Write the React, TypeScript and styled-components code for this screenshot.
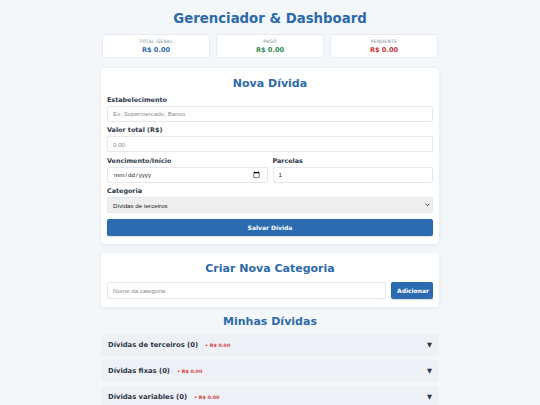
import React from "react";
import styled, { createGlobalStyle } from "styled-components";

const GlobalStyle = createGlobalStyle`
  body {
    margin: 0;
    background: #f4f7fa;
    font-family: "DejaVu Sans", Verdana, sans-serif;
    color: #2d3748;
  }
  * { box-sizing: border-box; }
`;

const Page = styled.main`
  width: 338px;
  margin: 0 auto;
  padding: 9px 0 0;
  display: flex;
  flex-direction: column;
`;

const MainTitle = styled.h1`
  margin: 0 0 5px;
  text-align: center;
  font-size: 13.3px;
  font-weight: bold;
  color: #2c6aa9;
  line-height: 20px;
`;

const StatsRow = styled.div`
  display: grid;
  grid-template-columns: repeat(3, 1fr);
  gap: 6px;
  padding: 0 1px;
  margin-bottom: 10px;
`;

const StatCard = styled.div`
  height: 24px;
  background: #fff;
  border: 1px solid #e6ebf1;
  border-radius: 3px;
  display: flex;
  flex-direction: column;
  align-items: center;
  justify-content: center;
  gap: 2px;
`;

const StatLabel = styled.span`
  font-size: 4.6px;
  color: #7b8794;
  text-transform: uppercase;
  letter-spacing: 0.2px;
`;

const StatValue = styled.span<{ $tone: string }>`
  font-size: 6.6px;
  font-weight: bold;
  color: ${(p) => p.$tone};
`;

const Card = styled.section<{ $gap: number }>`
  background: #fff;
  border-radius: 4px;
  box-shadow: 0 1px 4px rgba(0, 0, 0, 0.08);
  padding: 8px 6px 8px;
  margin-bottom: ${(p) => p.$gap}px;
`;

const CardTitle = styled.h2<{ $gap: number }>`
  margin: 0 0 ${(p) => p.$gap}px;
  text-align: center;
  font-size: 11px;
  font-weight: bold;
  color: #2c6aa9;
  line-height: 16px;
`;

const Field = styled.div<{ $gap?: number }>`
  display: flex;
  flex-direction: column;
  margin-bottom: ${(p) => p.$gap ?? 5.5}px;
`;

const Label = styled.label`
  font-size: 6.4px;
  font-weight: bold;
  color: #2d3748;
  margin-bottom: 2px;
  line-height: 7px;
`;

const Input = styled.input<{ $h?: number }>`
  height: ${(p) => p.$h ?? 16}px;
  width: 100%;
  border: 1px solid #e3e8ee;
  border-radius: 2px;
  padding: 0 5px;
  font-family: "Liberation Sans", Arial, sans-serif;
  font-size: 6.2px;
  color: #222;
  background: #fff;
  outline: none;
  &::placeholder { color: #8a8a8a; }
`;

const SelectWrap = styled.div`
  position: relative;
  height: 16px;
  svg {
    position: absolute;
    right: 3px;
    top: 6px;
    pointer-events: none;
  }
`;

const Select = styled.select`
  appearance: none;
  display: block;
  height: 16px;
  width: 100%;
  border: 1px solid #e3e8ee;
  border-radius: 2px;
  padding: 0 5px;
  font-family: "Liberation Sans", Arial, sans-serif;
  font-size: 6.2px;
  color: #222;
  background: #efefef;
`;

const Row = styled.div`
  display: grid;
  grid-template-columns: 1fr 1fr;
  gap: 5px;
`;

const PrimaryButton = styled.button`
  display: block;
  height: 17px;
  width: 100%;
  border: none;
  border-radius: 2px;
  background: #2c6bb0;
  color: #fff;
  font-family: "DejaVu Sans", Verdana, sans-serif;
  font-size: 6px;
  font-weight: bold;
  box-shadow: 0 1px 2px rgba(0, 0, 0, 0.15);
`;

const InlineForm = styled.div`
  display: flex;
  gap: 5px;
`;

const AddButton = styled(PrimaryButton)`
  width: 42px;
  flex-shrink: 0;
`;

const AccordionList = styled.div`
  display: flex;
  flex-direction: column;
  gap: 4px;
`;

const AccordionItem = styled.div`
  height: 22px;
  flex-shrink: 0;
  background: #edf1f6;
  border-radius: 3px;
  display: flex;
  align-items: center;
  padding: 0 7px;
`;

const ItemName = styled.span`
  font-size: 6.8px;
  font-weight: bold;
  color: #2d3748;
`;

const ItemTotal = styled.span`
  font-size: 4.8px;
  font-weight: bold;
  color: #d33a3a;
  margin-left: 7px;
`;

const Arrow = styled.span`
  margin-left: auto;
  font-size: 6.5px;
  color: #2d3748;
`;

const categories = ["Dívidas de terceiros", "Dívidas fixas", "Dívidas variables"];

export default function App() {
  return (
    <>
      <GlobalStyle />
      <Page>
        <MainTitle>Gerenciador &amp; Dashboard</MainTitle>
        <StatsRow>
          <StatCard>
            <StatLabel>Total Geral</StatLabel>
            <StatValue $tone="#2c6aa9">R$ 0.00</StatValue>
          </StatCard>
          <StatCard>
            <StatLabel>Pago</StatLabel>
            <StatValue $tone="#2f8a55">R$ 0.00</StatValue>
          </StatCard>
          <StatCard>
            <StatLabel>Pendente</StatLabel>
            <StatValue $tone="#c53434">R$ 0.00</StatValue>
          </StatCard>
        </StatsRow>

        <Card $gap={9}>
          <CardTitle $gap={4.5}>Nova Dívida</CardTitle>
          <Field>
            <Label>Estabelecimento</Label>
            <Input placeholder="Ex: Supermercado, Banco" />
          </Field>
          <Field>
            <Label>Valor total (R$)</Label>
            <Input placeholder="0,00" />
          </Field>
          <Row>
            <Field>
              <Label>Vencimento/Início</Label>
              <Input type="date" />
            </Field>
            <Field>
              <Label>Parcelas</Label>
              <Input defaultValue="1" />
            </Field>
          </Row>
          <Field $gap={6}>
            <Label>Categoria</Label>
            <SelectWrap>
              <Select defaultValue="Dívidas de terceiros">
                {categories.map((c) => (
                  <option key={c}>{c}</option>
                ))}
              </Select>
              <svg width="5" height="4" viewBox="0 0 10 8">
                <path d="M1 1.5 L5 5.5 L9 1.5" fill="none" stroke="#333" strokeWidth="2" />
              </svg>
            </SelectWrap>
          </Field>
          <PrimaryButton>Salvar Dívida</PrimaryButton>
        </Card>

        <Card $gap={7}>
          <CardTitle $gap={5}>Criar Nova Categoria</CardTitle>
          <InlineForm>
            <Input $h={17} placeholder="Nome da categoria" />
            <AddButton>Adicionar</AddButton>
          </InlineForm>
        </Card>

        <CardTitle $gap={4}>Minhas Dívidas</CardTitle>
        <AccordionList>
          {categories.map((c) => (
            <AccordionItem key={c}>
              <ItemName>{c} (0)</ItemName>
              <ItemTotal>• R$ 0.00</ItemTotal>
              <Arrow>▼</Arrow>
            </AccordionItem>
          ))}
        </AccordionList>
      </Page>
    </>
  );
}
